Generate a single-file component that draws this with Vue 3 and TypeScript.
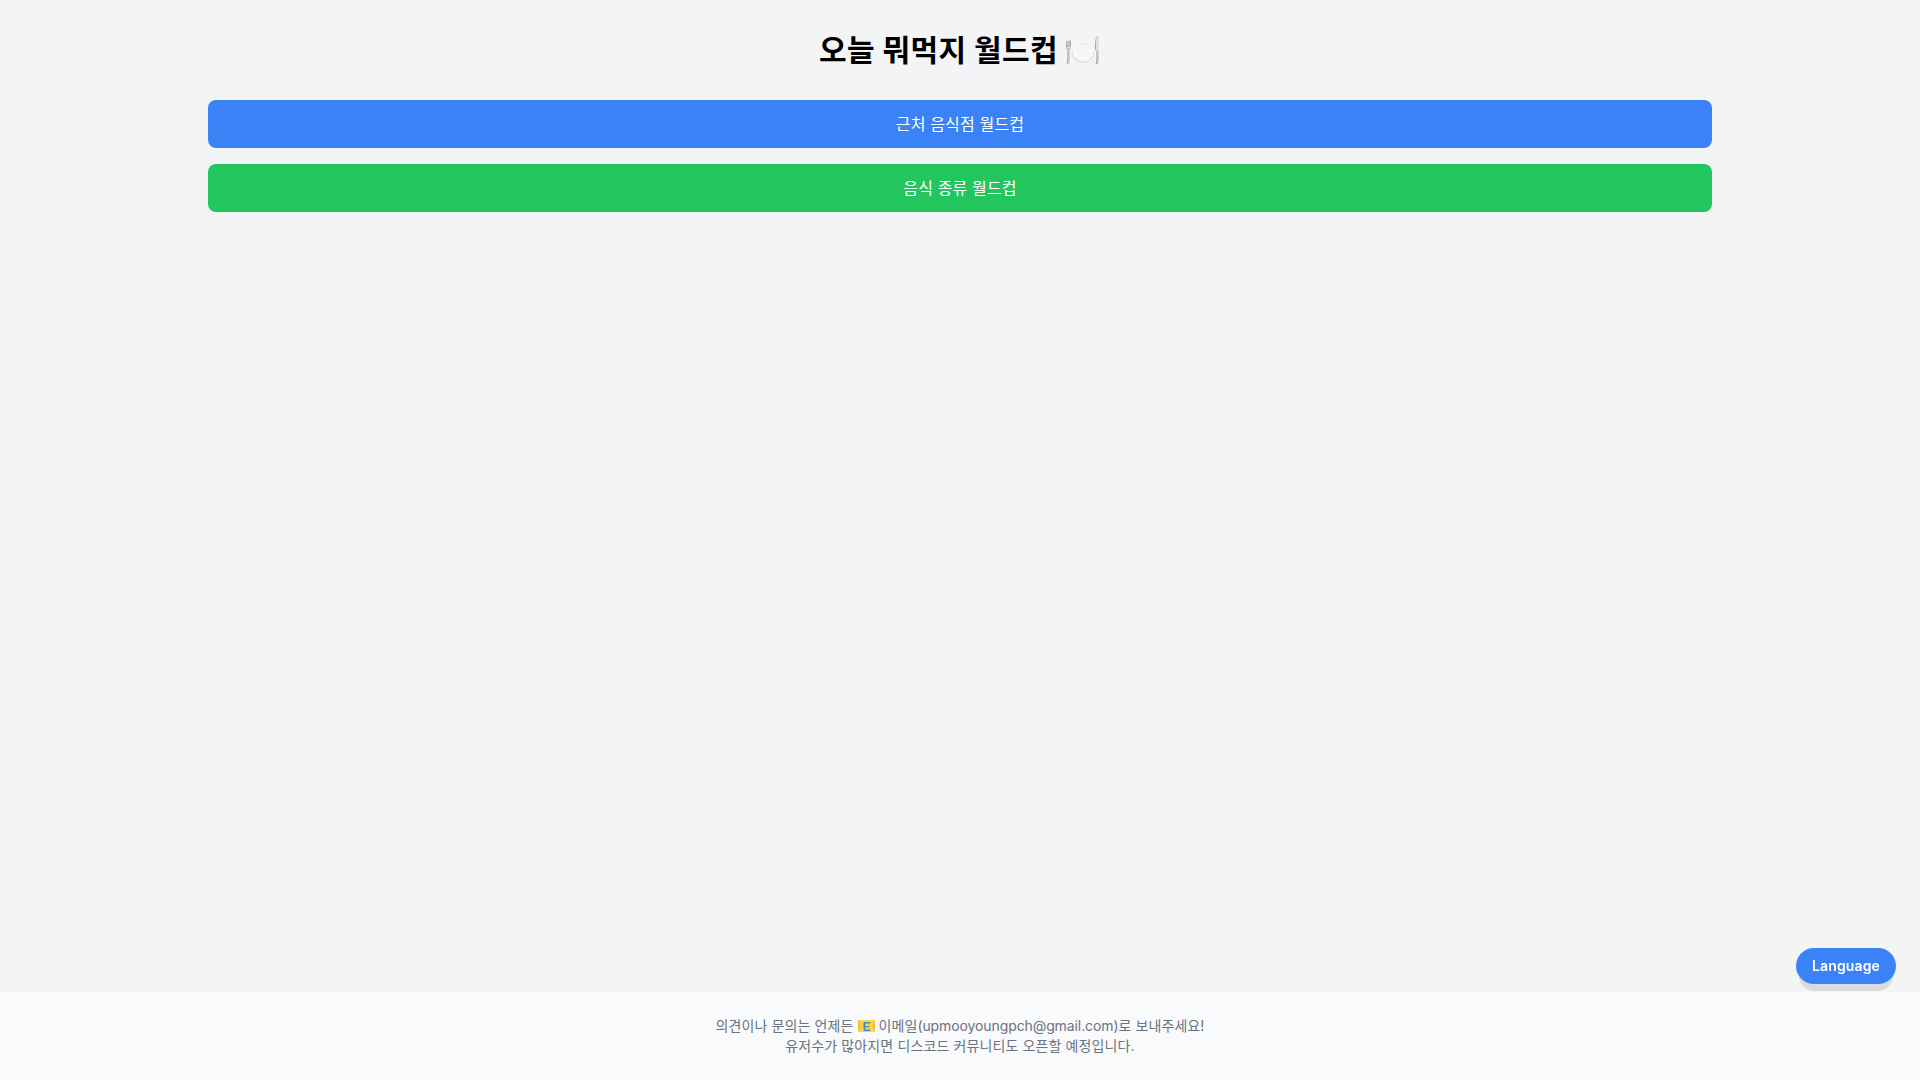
<script setup lang="ts">
const modes: { label: string; tone: string }[] = [
  { label: '근처 음식점 월드컵', tone: 'blue' },
  { label: '음식 종류 월드컵', tone: 'green' },
]
</script>

<template>
  <div class="page">
    <main class="main">
      <h1 class="title">오늘 뭐먹지 월드컵 <span class="dish">🍽️</span></h1>
      <div class="modes">
        <button v-for="m in modes" :key="m.label" class="mode" :class="m.tone">{{ m.label }}</button>
      </div>
    </main>
    <footer class="footer">
      <p class="first">
        의견이나 문의는 언제든
        <svg class="mail" viewBox="0 0 17 12" width="17" height="12" role="img" aria-label="이메일 아이콘">
          <rect width="17" height="12" fill="#ffd54f" />
          <path d="M0 0 3 6 0 12M17 0 14 6 17 12" fill="#fbbc2c" />
          <path d="M0 0 6 5M17 0 11 5" stroke="#f6b93b" stroke-width=".7" fill="none" />
          <text x="8.5" y="11" text-anchor="middle" class="mail-e">E</text>
        </svg>
        이메일<span class="latin">(upmooyoungpch@gmail.com)</span>로 보내주세요!
      </p>
      <p class="second">유저수가 많아지면 디스코드 커뮤니티도 오픈할 예정입니다.</p>
    </footer>
    <button class="lang">Language</button>
  </div>
</template>

<style>
body { margin: 0; }
</style>

<style scoped>
.page {
  min-height: 100vh;
  display: flex;
  flex-direction: column;
  background: #f3f4f6;
  font-family: Inter, "Noto Sans CJK KR", sans-serif;
  letter-spacing: .01em;
}
.main {
  flex: 1;
  width: 100%;
  max-width: 1536px;
  margin: 0 auto;
  padding: 32px 16px 0;
  box-sizing: border-box;
}
.title {
  margin: 0 0 32px;
  font-size: 30px;
  line-height: 36px;
  font-weight: 700;
  letter-spacing: .4px;
  text-align: center;
  color: #000;
}
.dish {
  margin: 0 2px 0 -2px;
  letter-spacing: -1.5px;
}
.modes {
  display: flex;
  flex-direction: column;
  gap: 16px;
}
.mode {
  height: 48px;
  padding: 12px 16px;
  border: 0;
  border-radius: 8px;
  color: #fff;
  font: inherit;
  font-size: 16px;
  line-height: 24px;
  letter-spacing: .01em;
}
.blue { background: #3b82f6; }
.green { background: #22c55e; }
.footer {
  padding: 24px 16px;
  background: #f9fafb;
  color: #6b7280;
  font-size: 14px;
  line-height: 20px;
  text-align: center;
}
.footer p { margin: 0; }
.footer .first { letter-spacing: .1px; }
.footer .second { letter-spacing: .12px; }
.mail {
  margin: 0 -1px 0 1px;
  vertical-align: -1px;
}
.mail-e {
  font-family: "Liberation Sans", sans-serif;
  font-size: 12px;
  font-weight: 700;
  fill: #3f8fd6;
  letter-spacing: 0;
}
.latin { letter-spacing: -.1px; }
.lang {
  position: fixed;
  right: 24px;
  bottom: 96px;
  width: 100px;
  height: 36px;
  padding: 0 0 2px;
  border: 0;
  border-radius: 18px;
  background: #3b82f6;
  color: #fff;
  font: inherit;
  font-size: 14px;
  font-weight: 600;
  letter-spacing: .12px;
  box-shadow: 0 10px 0 -3px rgba(0,0,0,.1), 0 4px 0 -4px rgba(0,0,0,.1);
}
</style>
